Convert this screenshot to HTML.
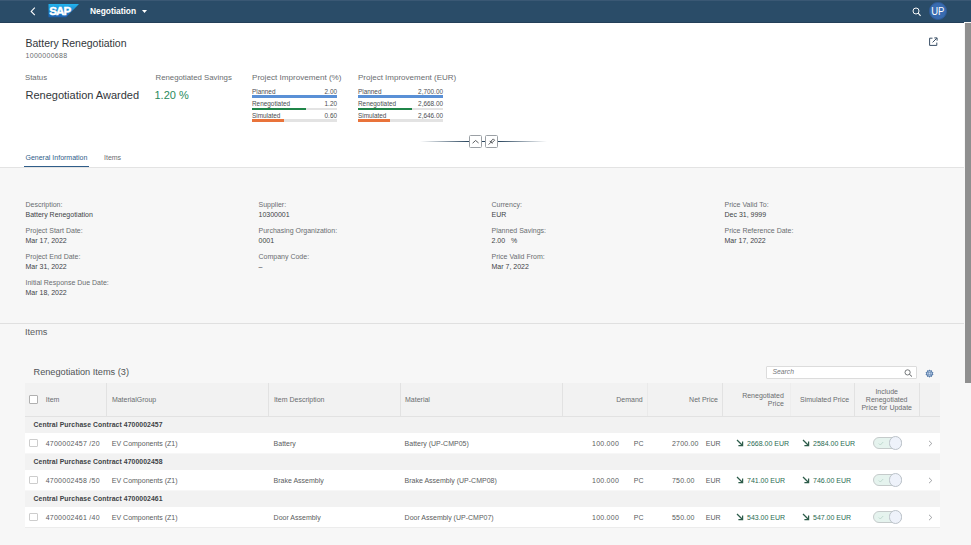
<!DOCTYPE html>
<html><head><meta charset="utf-8">
<style>
*{margin:0;padding:0;box-sizing:border-box}
html,body{width:971px;height:545px;overflow:hidden;background:#fff}
body{font-family:"Liberation Sans",sans-serif;color:#32363a;position:relative}
.a{position:absolute;white-space:nowrap;line-height:1}
.bar{position:absolute;height:2.8px;background:#e3e3e3}
.bar i{position:absolute;left:0;top:0;height:2.8px;display:block}
.sl{font-size:6.4px;color:#4a4d50}
</style></head><body>

<div class="a" style="left:0;top:0;width:971px;height:22px;background:#2a4c68"></div>
<div class="a" style="left:0;top:21.5px;width:971px;height:1px;background:#243f59"></div>
<div class="a" style="left:0;top:0;width:971px;height:1px;background:#3a5874"></div>
<svg class="a" style="left:30px;top:7px" width="6" height="9" viewBox="0 0 6 9"><path d="M4.8 0.6 L1.2 4.4 L4.8 8.2" fill="none" stroke="#fff" stroke-width="1.1"/></svg>
<svg class="a" style="left:48px;top:4px" width="32" height="14" viewBox="0 0 32 14"><defs><linearGradient id="lg" x1="0" y1="0" x2="0" y2="1"><stop offset="0" stop-color="#22b4ee"/><stop offset="1" stop-color="#1b5eb0"/></linearGradient></defs><path d="M0.5 0 H31 L18 13.3 H0.5 Z" fill="url(#lg)"/><text x="1.3" y="11.6" font-family="Liberation Sans" font-weight="bold" font-size="11.6" fill="#fff" stroke="#fff" stroke-width="0.5" letter-spacing="-0.9" transform="scale(1,0.92)">SAP</text></svg>
<div class="a" style="left:90px;top:7px;font-size:8.4px;font-weight:bold;color:#fff">Negotiation</div>
<svg class="a" style="left:142px;top:10px" width="5" height="3" viewBox="0 0 5 3"><path d="M0 0 H5 L2.5 3Z" fill="#fff"/></svg>
<svg class="a" style="left:911.5px;top:7px" width="10" height="10" viewBox="0 0 10 10"><circle cx="4" cy="4" r="3" fill="none" stroke="#fff" stroke-width="0.95"/><path d="M6.2 6.2 L8.6 8.9" stroke="#fff" stroke-width="1.1"/></svg>
<div class="a" style="left:929px;top:2.2px;width:17.6px;height:17.6px;border-radius:50%;background:#386bb0;border:0.6px solid #2f5b98"></div>
<div class="a" style="left:929px;top:5.5px;width:17.6px;text-align:center;font-size:10.8px;color:#fff;transform:scaleX(0.88)">UP</div>
<div class="a" style="left:25.5px;top:37.5px;font-size:10.5px;color:#32363a">Battery Renegotiation</div>
<div class="a" style="left:25.5px;top:52px;font-size:7px;color:#6a6d70;letter-spacing:0.3px">1000000688</div>
<svg class="a" style="left:929px;top:37px" width="9" height="9" viewBox="0 0 9 9"><path d="M3.5 1.2 H0.6 V8.4 H7.8 V5.6" fill="none" stroke="#3a4f66" stroke-width="1"/><path d="M3.6 5.4 L7.8 1.2 M5.3 0.9 H8.1 V3.7" fill="none" stroke="#3a4f66" stroke-width="1"/></svg>
<div class="a" style="left:25px;top:74px;font-size:7.8px;color:#6a6d70">Status</div>
<div class="a" style="left:25.5px;top:89.8px;font-size:11px;color:#32363a">Renegotiation Awarded</div>
<div class="a" style="left:155.5px;top:74px;font-size:7.8px;color:#6a6d70">Renegotiated Savings</div>
<div class="a" style="left:154.5px;top:89.5px;font-size:11px;color:#2a8a5c">1.20 %</div>
<div class="a" style="left:252px;top:74px;font-size:8.1px;color:#6a6d70">Project Improvement (%)</div>
<div class="a sl" style="left:252px;top:88.7px">Planned</div>
<div class="a sl" style="left:337px;top:88.7px;transform:translateX(-100%)">2.00</div>
<div class="bar" style="left:252px;top:95.2px;width:85px"><i style="width:85px;background:#5a90d6"></i></div>
<div class="a sl" style="left:252px;top:100.8px">Renegotiated</div>
<div class="a sl" style="left:337px;top:100.8px;transform:translateX(-100%)">1.20</div>
<div class="bar" style="left:252px;top:107.7px;width:85px"><i style="width:54px;background:#1f8548"></i></div>
<div class="a sl" style="left:252px;top:112.8px">Simulated</div>
<div class="a sl" style="left:337px;top:112.8px;transform:translateX(-100%)">0.60</div>
<div class="bar" style="left:252px;top:119.4px;width:85px"><i style="width:32px;background:#e9733a"></i></div>
<div class="a" style="left:358px;top:74px;font-size:8px;color:#6a6d70">Project Improvement (EUR)</div>
<div class="a sl" style="left:358px;top:88.7px">Planned</div>
<div class="a sl" style="left:443px;top:88.7px;transform:translateX(-100%)">2,700.00</div>
<div class="bar" style="left:358px;top:95.2px;width:85px"><i style="width:85px;background:#5a90d6"></i></div>
<div class="a sl" style="left:358px;top:100.8px">Renegotiated</div>
<div class="a sl" style="left:443px;top:100.8px;transform:translateX(-100%)">2,668.00</div>
<div class="bar" style="left:358px;top:107.7px;width:85px"><i style="width:54px;background:#1f8548"></i></div>
<div class="a sl" style="left:358px;top:112.8px">Simulated</div>
<div class="a sl" style="left:443px;top:112.8px;transform:translateX(-100%)">2,646.00</div>
<div class="bar" style="left:358px;top:119.4px;width:85px"><i style="width:32px;background:#e9733a"></i></div>
<div class="a" style="left:420px;top:140.7px;width:127px;height:1px;background:linear-gradient(90deg,rgba(53,74,95,0),#2a465e 38%,#2a465e 62%,rgba(53,74,95,0))"></div>
<div class="a" style="left:469px;top:135px;width:12.5px;height:12.5px;background:#fff;border:0.8px solid #9ba0a5;border-radius:1.5px"></div>
<div class="a" style="left:485px;top:135px;width:12.5px;height:12.5px;background:#fff;border:0.8px solid #9ba0a5;border-radius:1.5px"></div>
<svg class="a" style="left:471px;top:137px" width="9" height="9" viewBox="0 0 9 9"><path d="M1.6 6.2 L4.6 3.5 L7.6 6.0" fill="none" stroke="#32363a" stroke-width="0.8"/></svg>
<svg class="a" style="left:487px;top:137px" width="9" height="9" viewBox="0 0 9 9"><path d="M1.6 7.6 L4 5.2" stroke="#32363a" stroke-width="0.8"/><path d="M2.7 3.9 L5.3 6.5" stroke="#32363a" stroke-width="0.9"/><path d="M4 4.2 L6.3 1.9 L7.6 3.2 L5.3 5.5 Z" fill="#fff" stroke="#32363a" stroke-width="0.8"/></svg>
<div class="a" style="left:25.5px;top:154px;font-size:7px;color:#2f5d89">General Information</div>
<div class="a" style="left:24px;top:165.8px;width:65px;height:1.6px;background:#2f5d89"></div>
<div class="a" style="left:104px;top:154px;font-size:7px;color:#6a6d70">Items</div>
<div class="a" style="left:0;top:167.3px;width:964px;height:378px;background:#f7f7f7;border-top:1px solid #e3e3e3"></div>
<div class="a" style="left:0;top:323px;width:964px;height:1px;background:#e0e0e0"></div>
<div class="a" style="left:25.5px;top:200.5px;font-size:7px;color:#6a6d70">Description:</div>
<div class="a" style="left:25.5px;top:210.8px;font-size:7px;color:#404346">Battery Renegotiation</div>
<div class="a" style="left:25.5px;top:226.7px;font-size:7px;color:#6a6d70">Project Start Date:</div>
<div class="a" style="left:25.5px;top:237.0px;font-size:7px;color:#404346">Mar 17, 2022</div>
<div class="a" style="left:25.5px;top:252.9px;font-size:7px;color:#6a6d70">Project End Date:</div>
<div class="a" style="left:25.5px;top:263.2px;font-size:7px;color:#404346">Mar 31, 2022</div>
<div class="a" style="left:25.5px;top:279.1px;font-size:7px;color:#6a6d70">Initial Response Due Date:</div>
<div class="a" style="left:25.5px;top:289.4px;font-size:7px;color:#404346">Mar 18, 2022</div>
<div class="a" style="left:258.5px;top:200.5px;font-size:7px;color:#6a6d70">Supplier:</div>
<div class="a" style="left:258.5px;top:210.8px;font-size:7px;color:#404346">10300001</div>
<div class="a" style="left:258.5px;top:226.7px;font-size:7px;color:#6a6d70">Purchasing Organization:</div>
<div class="a" style="left:258.5px;top:237.0px;font-size:7px;color:#404346">0001</div>
<div class="a" style="left:258.5px;top:252.9px;font-size:7px;color:#6a6d70">Company Code:</div>
<div class="a" style="left:258.5px;top:263.2px;font-size:7px;color:#404346">&ndash;</div>
<div class="a" style="left:491.5px;top:200.5px;font-size:7px;color:#6a6d70">Currency:</div>
<div class="a" style="left:491.5px;top:210.8px;font-size:7px;color:#404346">EUR</div>
<div class="a" style="left:491.5px;top:226.7px;font-size:7px;color:#6a6d70">Planned Savings:</div>
<div class="a" style="left:491.5px;top:237.0px;font-size:7px;color:#404346">2.00&nbsp;&nbsp;&nbsp;%</div>
<div class="a" style="left:491.5px;top:252.9px;font-size:7px;color:#6a6d70">Price Valid From:</div>
<div class="a" style="left:491.5px;top:263.2px;font-size:7px;color:#404346">Mar 7, 2022</div>
<div class="a" style="left:724.5px;top:200.5px;font-size:7px;color:#6a6d70">Price Valid To:</div>
<div class="a" style="left:724.5px;top:210.8px;font-size:7px;color:#404346">Dec 31, 9999</div>
<div class="a" style="left:724.5px;top:226.7px;font-size:7px;color:#6a6d70">Price Reference Date:</div>
<div class="a" style="left:724.5px;top:237.0px;font-size:7px;color:#404346">Mar 17, 2022</div>
<div class="a" style="left:25px;top:328.4px;font-size:9.2px;color:#5a5d60">Items</div>
<div class="a" style="left:33.5px;top:367.7px;font-size:9.2px;color:#505356">Renegotiation Items (3)</div>
<div class="a" style="left:766.3px;top:366px;width:150.5px;height:13.4px;background:#fff;border:0.8px solid #dcdcdc;border-radius:1px"></div>
<div class="a" style="left:772.5px;top:369.4px;font-size:6.75px;font-style:italic;color:#74777a">Search</div>
<svg class="a" style="left:904px;top:368.5px" width="9" height="9" viewBox="0 0 9 9"><circle cx="3.6" cy="3.4" r="2.6" fill="none" stroke="#4a4d50" stroke-width="0.75"/><path d="M5.5 5.3 L8 7.6" stroke="#4a4d50" stroke-width="0.9"/></svg>
<svg class="a" style="left:925px;top:368.5px" width="9" height="9" viewBox="0 0 9 9"><path d="M4.5 0.4 L5.4 1.6 L6.9 1.2 L7.1 2.7 L8.5 3.4 L7.7 4.6 L8.5 5.8 L7.1 6.4 L6.9 7.9 L5.4 7.5 L4.5 8.7 L3.6 7.5 L2.1 7.9 L1.9 6.4 L0.5 5.8 L1.3 4.6 L0.5 3.4 L1.9 2.7 L2.1 1.2 L3.6 1.6 Z" fill="#5a7eab"/><circle cx="4.5" cy="4.55" r="2.2" fill="#c9daf0"/><path d="M3.2 3.5 H5.8 M3.2 5.6 H5.8 M3.5 3 V6.1 M5.5 3 V6.1" stroke="#5a7eab" stroke-width="0.5"/></svg>
<div class="a" style="left:25px;top:382.5px;width:915px;height:34px;background:#f2f2f2;border-bottom:1px solid #e2e2e2"></div>
<div class="a" style="left:106.0px;top:383px;width:1px;height:33px;background:#e2e2e2"></div>
<div class="a" style="left:268.0px;top:383px;width:1px;height:33px;background:#e2e2e2"></div>
<div class="a" style="left:400.0px;top:383px;width:1px;height:33px;background:#e2e2e2"></div>
<div class="a" style="left:562.0px;top:383px;width:1px;height:33px;background:#e2e2e2"></div>
<div class="a" style="left:646.5px;top:383px;width:1px;height:33px;background:#eaeaea"></div>
<div class="a" style="left:722.0px;top:383px;width:1px;height:33px;background:#e2e2e2"></div>
<div class="a" style="left:789.5px;top:383px;width:1px;height:33px;background:#ededed"></div>
<div class="a" style="left:854.2px;top:383px;width:1px;height:33px;background:#e2e2e2"></div>
<div class="a" style="left:919.0px;top:383px;width:1px;height:33px;background:#e2e2e2"></div>
<div class="a" style="left:29.3px;top:395.4px;width:8.5px;height:8.3px;background:#fff;border:0.8px solid #b0b0b0;border-radius:1px"></div>
<div class="a" style="left:45.8px;top:396.2px;font-size:7px;color:#6a6d70;line-height:8px">Item</div>
<div class="a" style="left:111.9px;top:396.2px;font-size:7px;color:#6a6d70;line-height:8px">MaterialGroup</div>
<div class="a" style="left:273.9px;top:396.2px;font-size:7px;color:#6a6d70;line-height:8px">Item Description</div>
<div class="a" style="left:405px;top:396.2px;font-size:7px;color:#6a6d70;line-height:8px">Material</div>
<div class="a" style="left:642.7px;top:396.2px;transform:translateX(-100%);text-align:right;font-size:7px;color:#6a6d70;line-height:8px">Demand</div>
<div class="a" style="left:717.9px;top:396.2px;transform:translateX(-100%);text-align:right;font-size:7px;color:#6a6d70;line-height:8px">Net Price</div>
<div class="a" style="left:783.8px;top:392.2px;transform:translateX(-100%);text-align:right;font-size:7px;color:#6a6d70;line-height:8px">Renegotiated<br>Price</div>
<div class="a" style="left:800px;top:396.2px;font-size:7px;color:#6a6d70;line-height:8px">Simulated Price</div>
<div class="a" style="left:886.7px;top:388px;transform:translateX(-50%);text-align:center;font-size:7px;color:#6a6d70;line-height:8px">Include<br>Renegotiated<br>Price for Update</div>
<div class="a" style="left:25px;top:416.5px;width:915px;height:16.5px;background:#f2f2f2"></div>
<div class="a" style="left:33.6px;top:422.4px;font-size:6.8px;letter-spacing:0.1px;font-weight:bold;color:#404346">Central Purchase Contract 4700002457</div>
<div class="a" style="left:25px;top:433.0px;width:915px;height:20px;background:#fff"></div>
<div class="a" style="left:29.2px;top:439.2px;width:8.5px;height:8px;background:#fff;border:0.8px solid #cdcdcd;border-radius:1px"></div>
<div class="a" style="left:45.7px;top:439.7px;font-size:7px;color:#5a5d60;letter-spacing:0.25px">4700002457 /20</div>
<div class="a" style="left:111.8px;top:439.7px;font-size:7px;color:#5a5d60;">EV Components (Z1)</div>
<div class="a" style="left:273.6px;top:439.7px;font-size:7px;color:#5a5d60;">Battery</div>
<div class="a" style="left:404.6px;top:439.7px;font-size:7px;color:#5a5d60;">Battery (UP-CMP05)</div>
<div class="a" style="left:592px;top:439.7px;font-size:7px;color:#5a5d60;letter-spacing:0.25px">100.000</div>
<div class="a" style="left:633.8px;top:439.7px;font-size:7px;color:#5a5d60;">PC</div>
<div class="a" style="left:672px;top:439.7px;font-size:7px;color:#5a5d60;letter-spacing:0.2px">2700.00</div>
<div class="a" style="left:705.8px;top:439.7px;font-size:7px;color:#5a5d60;">EUR</div>
<svg class="a" style="left:735.5px;top:439.4px" width="8" height="8" viewBox="0 0 8 8"><path d="M1 1 L6.3 6.3 M2.4 6.6 H6.6 V2.4" fill="none" stroke="#2d5c4a" stroke-width="1.25"/></svg>
<div class="a" style="left:747px;top:439.7px;font-size:7px;color:#2b6b52;">2668.00 EUR</div>
<svg class="a" style="left:801.5px;top:439.4px" width="8" height="8" viewBox="0 0 8 8"><path d="M1 1 L6.3 6.3 M2.4 6.6 H6.6 V2.4" fill="none" stroke="#2d5c4a" stroke-width="1.25"/></svg>
<div class="a" style="left:813px;top:439.7px;font-size:7px;color:#2b6b52;">2584.00 EUR</div>
<div class="a" style="left:873px;top:437.2px;width:28.5px;height:11.5px;background:#e5f3ee;border:0.8px solid #c5cbcb;border-radius:6px"></div>
<svg class="a" style="left:878px;top:440.6px" width="6" height="5" viewBox="0 0 6 5"><path d="M0.8 2.5 L2.3 4 L5.2 1" fill="none" stroke="#b5d3c8" stroke-width="0.8"/></svg>
<div class="a" style="left:888.5px;top:436.3px;width:13.3px;height:13.3px;background:#eef2fa;border:0.8px solid #bcc3ca;border-radius:50%"></div>
<svg class="a" style="left:928px;top:440.0px" width="5" height="7" viewBox="0 0 5 7"><path d="M1 0.8 L3.8 3.5 L1 6.2" fill="none" stroke="#8a8d90" stroke-width="0.8"/></svg>
<div class="a" style="left:25px;top:453.5px;width:915px;height:16.5px;background:#f2f2f2"></div>
<div class="a" style="left:33.6px;top:459.4px;font-size:6.8px;letter-spacing:0.1px;font-weight:bold;color:#404346">Central Purchase Contract 4700002458</div>
<div class="a" style="left:25px;top:470.0px;width:915px;height:20px;background:#fff"></div>
<div class="a" style="left:29.2px;top:476.2px;width:8.5px;height:8px;background:#fff;border:0.8px solid #cdcdcd;border-radius:1px"></div>
<div class="a" style="left:45.7px;top:476.7px;font-size:7px;color:#5a5d60;letter-spacing:0.25px">4700002458 /50</div>
<div class="a" style="left:111.8px;top:476.7px;font-size:7px;color:#5a5d60;">EV Components (Z1)</div>
<div class="a" style="left:273.6px;top:476.7px;font-size:7px;color:#5a5d60;">Brake Assembly</div>
<div class="a" style="left:404.6px;top:476.7px;font-size:7px;color:#5a5d60;">Brake Assembly (UP-CMP08)</div>
<div class="a" style="left:592px;top:476.7px;font-size:7px;color:#5a5d60;letter-spacing:0.25px">100.000</div>
<div class="a" style="left:633.8px;top:476.7px;font-size:7px;color:#5a5d60;">PC</div>
<div class="a" style="left:672px;top:476.7px;font-size:7px;color:#5a5d60;letter-spacing:0.2px">750.00</div>
<div class="a" style="left:705.8px;top:476.7px;font-size:7px;color:#5a5d60;">EUR</div>
<svg class="a" style="left:735.5px;top:476.4px" width="8" height="8" viewBox="0 0 8 8"><path d="M1 1 L6.3 6.3 M2.4 6.6 H6.6 V2.4" fill="none" stroke="#2d5c4a" stroke-width="1.25"/></svg>
<div class="a" style="left:747px;top:476.7px;font-size:7px;color:#2b6b52;">741.00 EUR</div>
<svg class="a" style="left:801.5px;top:476.4px" width="8" height="8" viewBox="0 0 8 8"><path d="M1 1 L6.3 6.3 M2.4 6.6 H6.6 V2.4" fill="none" stroke="#2d5c4a" stroke-width="1.25"/></svg>
<div class="a" style="left:813px;top:476.7px;font-size:7px;color:#2b6b52;">746.00 EUR</div>
<div class="a" style="left:873px;top:474.2px;width:28.5px;height:11.5px;background:#e5f3ee;border:0.8px solid #c5cbcb;border-radius:6px"></div>
<svg class="a" style="left:878px;top:477.6px" width="6" height="5" viewBox="0 0 6 5"><path d="M0.8 2.5 L2.3 4 L5.2 1" fill="none" stroke="#b5d3c8" stroke-width="0.8"/></svg>
<div class="a" style="left:888.5px;top:473.3px;width:13.3px;height:13.3px;background:#eef2fa;border:0.8px solid #bcc3ca;border-radius:50%"></div>
<svg class="a" style="left:928px;top:477.0px" width="5" height="7" viewBox="0 0 5 7"><path d="M1 0.8 L3.8 3.5 L1 6.2" fill="none" stroke="#8a8d90" stroke-width="0.8"/></svg>
<div class="a" style="left:25px;top:490.5px;width:915px;height:16.5px;background:#f2f2f2"></div>
<div class="a" style="left:33.6px;top:496.4px;font-size:6.8px;letter-spacing:0.1px;font-weight:bold;color:#404346">Central Purchase Contract 4700002461</div>
<div class="a" style="left:25px;top:507.0px;width:915px;height:20px;background:#fff"></div>
<div class="a" style="left:29.2px;top:513.2px;width:8.5px;height:8px;background:#fff;border:0.8px solid #cdcdcd;border-radius:1px"></div>
<div class="a" style="left:45.7px;top:513.7px;font-size:7px;color:#5a5d60;letter-spacing:0.25px">4700002461 /40</div>
<div class="a" style="left:111.8px;top:513.7px;font-size:7px;color:#5a5d60;">EV Components (Z1)</div>
<div class="a" style="left:273.6px;top:513.7px;font-size:7px;color:#5a5d60;">Door Assembly</div>
<div class="a" style="left:404.6px;top:513.7px;font-size:7px;color:#5a5d60;">Door Assembly (UP-CMP07)</div>
<div class="a" style="left:592px;top:513.7px;font-size:7px;color:#5a5d60;letter-spacing:0.25px">100.000</div>
<div class="a" style="left:633.8px;top:513.7px;font-size:7px;color:#5a5d60;">PC</div>
<div class="a" style="left:672px;top:513.7px;font-size:7px;color:#5a5d60;letter-spacing:0.2px">550.00</div>
<div class="a" style="left:705.8px;top:513.7px;font-size:7px;color:#5a5d60;">EUR</div>
<svg class="a" style="left:735.5px;top:513.4px" width="8" height="8" viewBox="0 0 8 8"><path d="M1 1 L6.3 6.3 M2.4 6.6 H6.6 V2.4" fill="none" stroke="#2d5c4a" stroke-width="1.25"/></svg>
<div class="a" style="left:747px;top:513.7px;font-size:7px;color:#2b6b52;">543.00 EUR</div>
<svg class="a" style="left:801.5px;top:513.4px" width="8" height="8" viewBox="0 0 8 8"><path d="M1 1 L6.3 6.3 M2.4 6.6 H6.6 V2.4" fill="none" stroke="#2d5c4a" stroke-width="1.25"/></svg>
<div class="a" style="left:813px;top:513.7px;font-size:7px;color:#2b6b52;">547.00 EUR</div>
<div class="a" style="left:873px;top:511.2px;width:28.5px;height:11.5px;background:#e5f3ee;border:0.8px solid #c5cbcb;border-radius:6px"></div>
<svg class="a" style="left:878px;top:514.6px" width="6" height="5" viewBox="0 0 6 5"><path d="M0.8 2.5 L2.3 4 L5.2 1" fill="none" stroke="#b5d3c8" stroke-width="0.8"/></svg>
<div class="a" style="left:888.5px;top:510.3px;width:13.3px;height:13.3px;background:#eef2fa;border:0.8px solid #bcc3ca;border-radius:50%"></div>
<svg class="a" style="left:928px;top:514.0px" width="5" height="7" viewBox="0 0 5 7"><path d="M1 0.8 L3.8 3.5 L1 6.2" fill="none" stroke="#8a8d90" stroke-width="0.8"/></svg>
<div class="a" style="left:25px;top:527.0px;width:915px;height:1px;background:#ececec"></div>
<div class="a" style="left:964px;top:22px;width:7px;height:523px;background:#f7f7f7"></div>
<div class="a" style="left:965px;top:23px;width:6px;height:360px;background:#8f8f8f"></div>
</body></html>
